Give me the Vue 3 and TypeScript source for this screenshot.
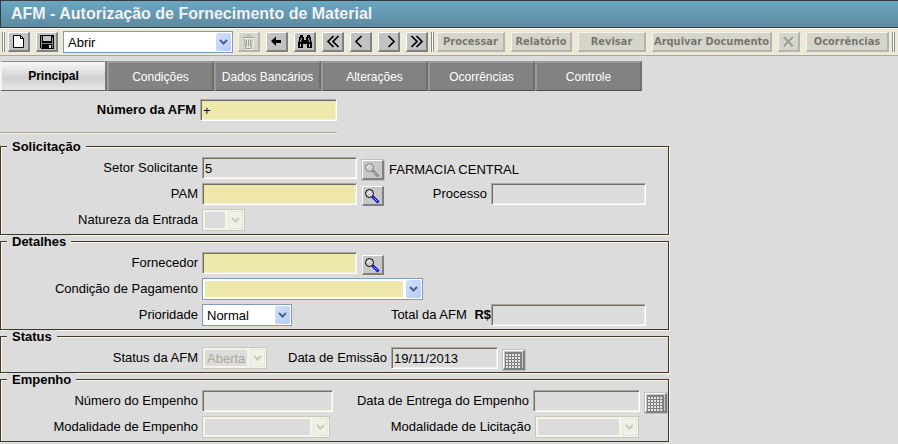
<script setup lang="ts">
import { ref } from 'vue'

interface ToolAction {
  label: string
  width: number
}

interface Glyph {
  name: string
  paths: string
}

const tabs: string[] = ['Principal', 'Condições', 'Dados Bancários', 'Alterações', 'Ocorrências', 'Controle']
const activeTab = ref('Principal')

const navigation: Glyph[] = [
  { name: 'Primeiro', paths: 'M9.5 3 4 8.5 9.5 14M14.500 3 9 8.5 14.500 14' },
  { name: 'Anterior', paths: 'M9.5 3 4 8.5 9.5 14' },
  { name: 'Próximo', paths: 'M8.5 3 14 8.5 8.5 14' },
  { name: 'Último', paths: 'M3.5 3 9 8.5 3.5 14M8.5 3 14 8.5 8.5 14' },
]

const actions: ToolAction[] = [
  { label: 'Processar', width: 68 },
  { label: 'Relatório', width: 61 },
  { label: 'Revisar', width: 68 },
  { label: 'Arquivar Documento', width: 120 },
]

const mode = ref('Abrir')
const priority = ref('Normal')
const afmNumber = ref('+')
const pam = ref('')
const supplier = ref('')
</script>

<template>
  <div class="page">
    <header class="title-bar"><h1>AFM - Autorização de Fornecimento de Material</h1></header>

    <div class="toolbar" role="toolbar" aria-label="Ações">
      <span class="grip"></span>
      <button class="tool" type="button" aria-label="Novo">
        <svg width="17" height="17" viewBox="0 0 17 17"><path d="M3.5 2.5h7l3 3v9h-10z" fill="#fff" stroke="#000" /><path d="M10.5 2.5v3h3" fill="none" stroke="#000" /></svg>
      </button>
      <button class="tool" type="button" aria-label="Salvar">
        <svg width="17" height="17" viewBox="0 0 17 17" shape-rendering="crispEdges"><path d="M2 2h14v14H3l-1-1z" fill="#000" /><path d="M3 3h1v12H3zM14 4h1v11h-1zM4 10h10v1H4z" fill="#858585" /><path d="M5 3h8v5H5z" fill="#c6c6c6" /><path d="M11 12h2v3h-2z" fill="#d8d8d8" /></svg>
      </button>
      <span class="combo mode">
        <select v-model="mode" aria-label="Modo"><option>Abrir</option></select>
        <span class="arrow"><svg width="9" height="6" viewBox="0 0 9 6"><path d="M1 1 4.5 4.5 8 1" /></svg></span>
      </span>
      <button class="tool" type="button" aria-label="Excluir" disabled>
        <svg width="17" height="17" viewBox="0 0 17 17"><path d="M4 5h10l-1 11H5z" fill="#e8e8e8" /><path d="M3 4.5h11M7 2.5h3M4.5 5l1 10.5h6L12.5 5M6.5 6.5v7M8.5 6.5v7M10.5 6.5v7" fill="none" stroke="#555" /><path d="M4 5.5h10M13.5 6l-1 10M6 16.5h7" fill="none" stroke="#fff" /></svg>
      </button>
      <button class="tool" type="button" aria-label="Voltar">
        <svg width="17" height="17" viewBox="0 0 17 17"><path d="M3 8 8 3.5V7h5v3H8v3z" fill="#000" /></svg>
      </button>
      <button class="tool" type="button" aria-label="Procurar">
        <svg width="17" height="17" viewBox="0 0 17 17"><path d="M4 2h3v2h1v3h2V4h1V2h3v2h1v3l1 3v5h-5v-4H7v4H2v-5l1-3V4h1z" fill="#000" /><path d="M5.5 5 4.5 9M12.500 5l1 4M4.5 11v3M13.5 11v3" stroke="#c6c6c6" /></svg>
      </button>
      <button v-for="item in navigation" :key="item.name" class="tool" type="button" :aria-label="item.name">
        <svg width="17" height="17" viewBox="0 0 17 17"><path :d="item.paths" fill="none" stroke="#000" stroke-width="1.7" /></svg>
      </button>
      <span class="grip"></span>
      <button v-for="action in actions" :key="action.label" class="tool" type="button" :style="{ width: action.width + 'px' }" disabled>{{ action.label }}</button>
      <button class="tool" type="button" aria-label="Cancelar" disabled>
        <svg width="17" height="17" viewBox="0 0 17 17"><path d="M5 5 13.5 14M13.5 5 5 14" stroke="#fff" stroke-width="2" /><path d="M4 4 13 13.5M13 4 4 13.5" stroke="#555" stroke-width="2.5" /></svg>
      </button>
      <button class="tool occurrences" type="button" disabled>Ocorrências</button>
      <span class="grip"></span>
    </div>

    <nav class="tabs" role="tablist">
      <button v-for="tab in tabs" :key="tab" type="button" role="tab" class="tab" :class="{ active: tab === activeTab }" :aria-selected="tab === activeTab" @click="activeTab = tab">{{ tab }}</button>
    </nav>

    <form class="form" @submit.prevent>
      <div class="number-row">
        <label for="afm">Número da AFM</label>
        <input id="afm" v-model="afmNumber" class="required" type="text" />
      </div>

      <fieldset>
        <legend>Solicitação</legend>
        <div class="rows">
          <div class="row">
            <label class="main-label" for="setor">Setor Solicitante</label>
            <input id="setor" class="medium" type="text" value="5" readonly />
            <span class="lookup">
              <button class="pick off" type="button" aria-label="Buscar setor" disabled>
                <svg width="17" height="16" viewBox="0 0 17 16"><path d="m9.5 9.5 5 5" stroke="#fff" stroke-width="3" /><path d="m8.5 8.5 6 6" stroke="#808080" stroke-width="3" /><path d="m9.5 9.5 4 4" stroke="#c6c6c6" /><circle cx="5.5" cy="5.5" r="4" fill="#d0d0d0" stroke="#808080" /><path d="M3.5 6V5.5l2-2" fill="none" stroke="#fff" /></svg>
              </button>
              <output for="setor">FARMACIA CENTRAL</output>
            </span>
          </div>
          <div class="row inset">
            <label class="main-label" for="pam">PAM</label>
            <input id="pam" v-model="pam" class="medium required" type="text" />
            <span class="lookup">
              <button class="pick" type="button" aria-label="Buscar PAM">
                <svg width="17" height="16" viewBox="0 0 17 16"><path d="m8.5 8.5 6 6" stroke="#00f" stroke-width="3" /><path d="m9.5 9.5 4 4" stroke="#b8b8d8" /><circle cx="5.5" cy="5.5" r="4" fill="#d0d0d0" stroke="#000" /><path d="M3.5 6V5.5l2-2" fill="none" stroke="#fff" /></svg>
              </button>
            </span>
            <span class="pair">
              <label for="processo">Processo</label>
              <input id="processo" class="medium" type="text" readonly />
            </span>
          </div>
          <div class="row">
            <label class="main-label" for="natureza">Natureza da Entrada</label>
            <span class="combo tiny">
              <select id="natureza" disabled></select>
              <span class="arrow"><svg width="9" height="6" viewBox="0 0 9 6"><path d="M1 1 4.5 4.5 8 1" /></svg></span>
            </span>
          </div>
        </div>
      </fieldset>

      <fieldset>
        <legend>Detalhes</legend>
        <div class="rows">
          <div class="row">
            <label class="main-label" for="fornecedor">Fornecedor</label>
            <input id="fornecedor" v-model="supplier" class="medium required" type="text" />
            <span class="lookup">
              <button class="pick" type="button" aria-label="Buscar fornecedor">
                <svg width="17" height="16" viewBox="0 0 17 16"><path d="m8.5 8.5 6 6" stroke="#00f" stroke-width="3" /><path d="m9.5 9.5 4 4" stroke="#b8b8d8" /><circle cx="5.5" cy="5.5" r="4" fill="#d0d0d0" stroke="#000" /><path d="M3.5 6V5.5l2-2" fill="none" stroke="#fff" /></svg>
              </button>
            </span>
          </div>
          <div class="row">
            <label class="main-label" for="pagamento">Condição de Pagamento</label>
            <span class="combo wide">
              <select id="pagamento" class="required"></select>
              <span class="arrow"><svg width="9" height="6" viewBox="0 0 9 6"><path d="M1 1 4.5 4.5 8 1" /></svg></span>
            </span>
          </div>
          <div class="row inset">
            <label class="main-label" for="prioridade">Prioridade</label>
            <span class="combo normal">
              <select id="prioridade" v-model="priority"><option>Normal</option></select>
              <span class="arrow"><svg width="9" height="6" viewBox="0 0 9 6"><path d="M1 1 4.5 4.5 8 1" /></svg></span>
            </span>
            <span class="pair money">
              <label for="total">Total da AFM <b>R$</b></label>
              <input id="total" class="medium" type="text" readonly />
            </span>
          </div>
        </div>
      </fieldset>

      <fieldset>
        <legend>Status</legend>
        <div class="rows">
          <div class="row">
            <label class="main-label" for="status">Status da AFM</label>
            <span class="combo small">
              <select id="status" disabled><option>Aberta</option></select>
              <span class="arrow"><svg width="9" height="6" viewBox="0 0 9 6"><path d="M1 1 4.5 4.5 8 1" /></svg></span>
            </span>
            <span class="pair near">
              <label for="emissao">Data de Emissão</label>
              <input id="emissao" class="date" type="text" value="19/11/2013" readonly />
              <span class="lookup">
                <button class="pick off" type="button" aria-label="Calendário" disabled>
                  <svg width="17" height="16" viewBox="0 0 17 16" shape-rendering="crispEdges"><path d="M0 0h17v16H0z" fill="#808080" /><path d="M1 2.5h15M1 5.5h15M1 8.5h15M1 11.5h15M1 14.5h15" stroke="#e4e4e4" stroke-width="2" stroke-dasharray="2 1" /></svg>
                </button>
              </span>
            </span>
          </div>
        </div>
      </fieldset>

      <fieldset>
        <legend>Empenho</legend>
        <div class="rows">
          <div class="row">
            <label class="main-label" for="empenho">Número do Empenho</label>
            <input id="empenho" class="short" type="text" readonly />
            <span class="pair">
              <label for="entrega">Data de Entrega do Empenho</label>
              <input id="entrega" class="date" type="text" readonly />
              <span class="lookup">
                <button class="pick off" type="button" aria-label="Calendário" disabled>
                  <svg width="17" height="16" viewBox="0 0 17 16" shape-rendering="crispEdges"><path d="M0 0h17v16H0z" fill="#808080" /><path d="M1 2.5h15M1 5.5h15M1 8.5h15M1 11.5h15M1 14.5h15" stroke="#e4e4e4" stroke-width="2" stroke-dasharray="2 1" /></svg>
                </button>
              </span>
            </span>
          </div>
          <div class="row deep">
            <label class="main-label" for="modalidade">Modalidade de Empenho</label>
            <span class="combo large">
              <select id="modalidade" disabled></select>
              <span class="arrow"><svg width="9" height="6" viewBox="0 0 9 6"><path d="M1 1 4.5 4.5 8 1" /></svg></span>
            </span>
            <span class="pair">
              <label for="licitacao">Modalidade de Licitação</label>
              <span class="combo fair">
                <select id="licitacao" disabled></select>
                <span class="arrow"><svg width="9" height="6" viewBox="0 0 9 6"><path d="M1 1 4.5 4.5 8 1" /></svg></span>
              </span>
            </span>
          </div>
        </div>
      </fieldset>
    </form>
  </div>
</template>

<style>
body {
  background: #dcdcdc;
}
</style>

<style scoped>
.page {
  font: 13px 'Liberation Sans', Arial, sans-serif;
  color: #000;
}

.page * {
  box-sizing: border-box;
}

.title-bar {
  height: 28px;
  padding-left: 10px;
  border: 1px solid #333c42;
  border-right: 0;
  background: linear-gradient(#6ba6c1, #5d8ba0);
}

h1 {
  margin: 0;
  font-size: 16px;
  line-height: 26px;
  color: #f1f1f1;
  white-space: nowrap;
}

.toolbar {
  display: flex;
  align-items: center;
  gap: 6px;
  height: 28px;
  padding: 0 2px;
  border-top: 1px solid #fff;
  border-bottom: 1px solid #aca899;
  background: #ece9d8;
}

.grip {
  flex: none;
  width: 3px;
  height: 20px;
  margin: 0 -3px;
  border: solid #8b8b95;
  border-width: 0 1px;
  background: #fff;
}

.grip:first-child {
  margin-left: 0;
}

.tool,
.pick {
  flex: none;
  display: flex;
  align-items: center;
  justify-content: center;
  width: 22px;
  height: 20px;
  padding: 0;
  border: solid;
  border-width: 1px 2px 2px 1px;
  border-color: #fff #808080 #808080 #fff;
  background: #c2c2c2;
  color: #000;
}

.tool {
  font: bold 11px 'DejaVu Sans Condensed', 'DejaVu Sans', sans-serif;
  white-space: nowrap;
}

.tool:disabled {
  opacity: 0.5;
}

.tool svg,
.pick svg {
  flex: none;
  display: block;
}

.occurrences {
  width: 83px;
}

.tabs {
  display: flex;
  padding-top: 5px;
}

.tab {
  width: 107px;
  height: 30px;
  padding: 0;
  border: solid;
  border-width: 2px 2px 1px;
  border-color: #9a9a9a #707068 #505048 #9a9a9a;
  background: #828282;
  color: #fff;
  font: 12px 'Liberation Sans', Arial, sans-serif;
}

.tab.active {
  border-color: #8f8f8f #7a7a7a #606060 #f4f4f4;
  border-top-width: 1px;
  background: linear-gradient(#f8f8f8, #d6d6d6 50%, #cfcfcf 55%, #e8e8e8);
  color: #000;
  font-weight: bold;
}

.form {
  max-width: 669px;
}

.number-row {
  display: flex;
  gap: 4px;
  width: 337px;
  margin-bottom: 7px;
  padding: 8px 0 11px;
  border-bottom: 1px solid #aca899;
  box-shadow: 0 1px #f1efe2;
  font-weight: bold;
}

.number-row label {
  width: 196px;
  text-align: right;
  line-height: 22px;
}

.number-row input {
  flex: 1;
  min-width: 0;
}

fieldset {
  min-width: 0;
  margin: 0;
  padding: 0;
  border: 1px solid #3c3a30;
  box-shadow: 1px 1px #fdf6dc, inset 1px 1px #fdf6dc;
}

legend {
  margin-left: 6px;
  padding: 0 5px;
  background: #dcdcdc;
  font-weight: bold;
  line-height: 13px;
}

.rows {
  display: grid;
  grid-auto-rows: 22px;
  gap: 4px;
  padding: 4px 0 3px;
}

.row,
.pair {
  display: flex;
  gap: 4px;
  line-height: 22px;
  white-space: nowrap;
}

.main-label {
  flex: none;
  width: 197px;
  text-align: right;
}

.pair {
  margin-left: auto;
}

.pair.near {
  margin-left: 17px;
}

.pair.money {
  gap: 0;
}

.money b {
  margin-left: 4px;
}

.row.inset {
  padding-right: 22px;
}

.row.deep {
  padding-right: 29px;
}

input {
  height: 22px;
  padding: 0 2px;
  border: 1px solid;
  border-color: #aca899 #fff #fff #aca899;
  border-radius: 0;
  outline: 0;
  box-shadow: inset 1px 1px #716f64, inset -1px -1px #f1efe2;
  background: #dcdcdc;
  color: #000;
  font: 13px 'Liberation Sans', Arial, sans-serif;
}

input.required {
  background: #eee8aa;
}

.medium {
  width: 155px;
}

.short {
  width: 131px;
}

.date {
  width: 107px;
}

.lookup {
  display: flex;
  gap: 4px;
  padding-top: 2px;
}

.pick {
  box-sizing: content-box;
  width: 19px;
  height: 17px;
  margin: 1px;
  background: #c8c8c8;
}

.pick.off {
  outline: 1px solid #c0c0c0;
}

.combo {
  position: relative;
  flex: none;
  display: flex;
  height: 22px;
}

.combo select {
  appearance: none;
  width: 100%;
  height: 22px;
  padding: 2px 19px 2px 2px;
  border: 1px solid #7f9db9;
  border-radius: 0;
  outline: 0;
  background: #fff;
  color: #000;
  font: 13px 'Liberation Sans', Arial, sans-serif;
  text-indent: 2px;
}

.combo select.required {
  background: linear-gradient(#eee8aa, #eee8aa) content-box, #fff;
}

.combo select:disabled {
  border-color: #c9c7ba;
  background: linear-gradient(#dcdcdc, #dcdcdc) content-box, #f5f4ea;
  color: #aca899;
  opacity: 1;
}

.arrow {
  position: absolute;
  top: 2px;
  right: 2px;
  display: flex;
  align-items: center;
  justify-content: center;
  width: 15px;
  height: 18px;
  border-radius: 2px;
  background: linear-gradient(135deg, #d3e0fd, #b6cbf8);
  pointer-events: none;
}

.arrow path {
  fill: none;
  stroke: #4d6185;
  stroke-width: 2;
}

select:disabled + .arrow {
  border: 1px solid #e6e5da;
  background: #f1f0e6;
}

select:disabled + .arrow path {
  stroke: #c9c7ba;
}

.mode {
  width: 170px;
  margin: 0 -1px;
}

.tiny {
  width: 43px;
}

.small {
  width: 65px;
}

.normal {
  width: 90px;
}

.fair {
  width: 104px;
}

.large {
  width: 128px;
}

.wide {
  width: 221px;
}
</style>
